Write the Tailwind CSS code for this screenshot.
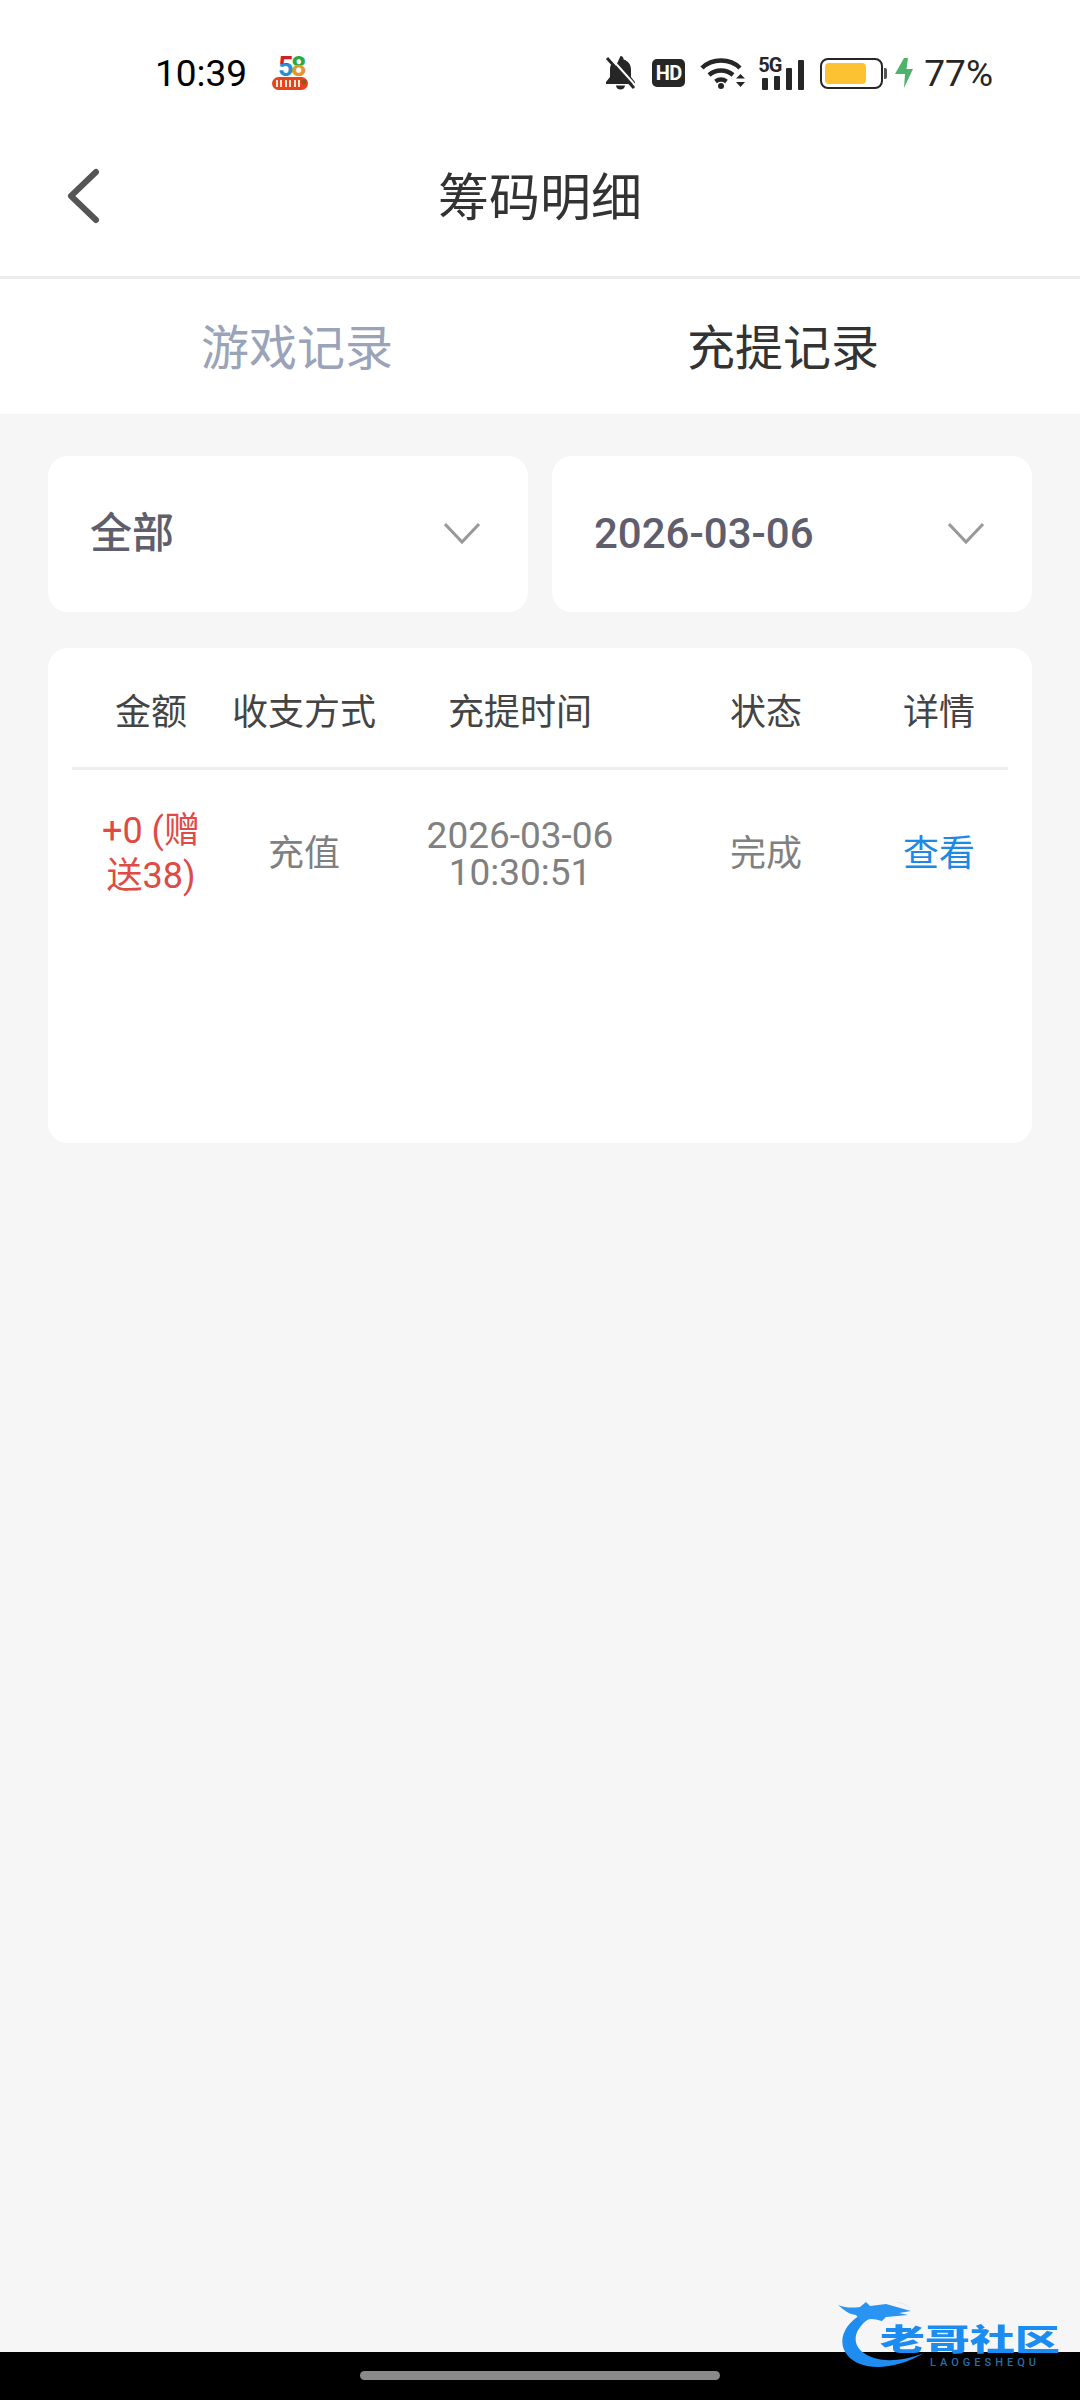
<!DOCTYPE html>
<html lang="zh-CN">
<head>
  <meta charset="UTF-8">
  <title>筹码明细</title>
  <script src="https://cdn.jsdelivr.net/npm/@tailwindcss/browser@4"></script>
</head>
<body class="bg-[#f6f6f6] font-['Roboto','Noto_Sans_CJK_SC',sans-serif]">
  <div class="relative flex h-[2400px] w-[1080px] flex-col overflow-hidden">

    <!-- status bar -->
    <div class="flex h-[120px] items-center bg-white pt-[26px]">
      <div class="ml-[155px] w-[117px] text-[37px] leading-none text-black">10:39</div>
      <svg class="h-[34px] w-[36px] overflow-visible" viewBox="0 0 36 34">
        <defs>
          <linearGradient id="five" x1="0" y1="0" x2="0" y2="1">
            <stop offset="0.42" stop-color="#d0202c"/><stop offset="0.42" stop-color="#2a8fd0"/>
          </linearGradient>
          <linearGradient id="eight" x1="0" y1="0" x2="0" y2="1">
            <stop offset="0.45" stop-color="#2cab3a"/><stop offset="0.45" stop-color="#e8962a"/>
          </linearGradient>
        </defs>
        <text x="6" y="20" font-family="Roboto" font-size="27" font-weight="700" fill="url(#five)">5</text>
        <text x="19" y="20" font-family="Roboto" font-size="27" font-weight="700" fill="url(#eight)">8</text>
        <rect x="0" y="21" width="36" height="13" rx="6.5" fill="#e8431c"/>
        <path d="M5 24v7M9 24v7M14 24v7M18 24v7M23 24v7M27 24v7" stroke="#ffe9d8" stroke-width="2"/>
        <circle cx="32" cy="26" r="2.500" fill="#8a5a20"/>
      </svg>
      <div class="ml-auto flex items-center pr-[87px]">
        <!-- bell off -->
        <svg class="h-[34px] w-[31px]" viewBox="0 0 31 34" fill="#262626">
          <path d="M15.5 0a3 3 0 0 1 3 3.4c4.600 1.300 7.500 5.200 7.500 10.100v7.500l4 5v2H1v-2l4-5v-7.500c0-2 .5-3.900 1.400-5.500L21 27H3z"/>
          <path d="M11 29.500h9a4.500 4 0 0 1-9 0z"/>
          <path d="M2 2 29 32" stroke="#262626" stroke-width="3"/>
          <path d="M5 1 31 30" stroke="#fff" stroke-width="2"/>
        </svg>
        <!-- HD -->
        <div class="ml-[16px] flex h-[28px] w-[33px] items-center justify-center rounded-[5px] bg-[#262626] text-[20px] font-bold leading-none tracking-[-0.5px] text-white">HD</div>
        <!-- wifi -->
        <svg class="ml-[15px] h-[34px] w-[46px]" viewBox="0 0 46 34" fill="none" stroke="#262626" stroke-width="4.500">
          <path d="M2 12C12 2 30 2 40 12"/>
          <path d="M9 19c7-6 17-6 24 0"/>
          <path d="M15.500 25.500c3.500-2.500 7.500-2.500 11 0"/>
          <circle cx="21" cy="30" r="3" fill="#262626" stroke="none"/>
          <path d="M36 22.500l4.500-4.500 4.500 4.500zM36 26h9l-4.500 5z" fill="#262626" stroke="none"/>
        </svg>
        <!-- 5G signal -->
        <div class="relative ml-[12px] h-[34px] w-[47px]">
          <span class="absolute left-0 top-[-1px] text-[20px] font-bold leading-none tracking-[-1px] text-[#262626]">5G</span>
          <div class="absolute bottom-0 left-[4px] flex items-end gap-[6px]">
            <div class="h-[12px] w-[6px] rounded-[1px] bg-[#262626]"></div>
            <div class="h-[14px] w-[6px] rounded-[1px] bg-[#262626]"></div>
            <div class="h-[22px] w-[6px] rounded-[1px] bg-[#262626]"></div>
            <div class="h-[30px] w-[6px] rounded-[1px] bg-[#262626]"></div>
          </div>
        </div>
        <!-- battery -->
        <div class="ml-[15px] flex items-center">
          <div class="flex h-[31px] w-[63px] items-center rounded-[8px] border-[2.5px] border-[#262626] bg-white pl-[3px]">
            <div class="h-[21px] w-[41px] rounded-[4px] bg-[#fcc232]"></div>
          </div>
          <div class="ml-[1px] h-[11px] w-[3px] rounded-r-[2px] bg-[#555]"></div>
        </div>
        <svg class="ml-[8px] h-[30px] w-[18px]" viewBox="0 0 18 30" fill="#4db36a"><path d="M9 0h4l-1.500 11H18L9 30l1-14H0z"/></svg>
        <div class="ml-[11px] text-[37px] leading-none text-[#262626]">77%</div>
      </div>
    </div>

    <!-- title bar -->
    <div class="relative flex h-[159px] items-center justify-center border-b-[3px] border-[#ececec] bg-white">
      <svg class="absolute left-[66px] top-[48px] h-[56px] w-[34px]" viewBox="0 0 34 56" fill="none" stroke="#555" stroke-width="6" stroke-linecap="round" stroke-linejoin="round">
        <path d="M30 4 5 28l25 24"/>
      </svg>
      <h1 class="text-[51px] font-normal leading-none text-[#333]">筹码明细</h1>
    </div>

    <!-- tabs -->
    <div class="flex h-[135px] items-center bg-white pt-[4px]">
      <div class="w-[594px] text-center text-[48px] leading-none text-[#9aa3b8]">游戏记录</div>
      <div class="w-[378px] text-center text-[48px] leading-none text-[#333]">充提记录</div>
    </div>

    <!-- filters -->
    <div class="flex-1 px-[48px] pt-[42px]">
      <div class="flex gap-[24px]">
        <div class="flex h-[156px] flex-1 items-center justify-between rounded-[20px] bg-white pl-[42px] pr-[48px]">
          <span class="text-[42px] font-medium leading-none text-[#5e5e6c]">全部</span>
          <svg class="h-[22px] w-[36px]" viewBox="0 0 36 22" fill="none" stroke="#999" stroke-width="3"><path d="M1 1l17 18L35 1"/></svg>
        </div>
        <div class="flex h-[156px] flex-1 items-center justify-between rounded-[20px] bg-white pl-[42px] pr-[48px]">
          <span class="text-[42px] font-medium leading-none text-[#5e5e6c]">2026-03-06</span>
          <svg class="h-[22px] w-[36px]" viewBox="0 0 36 22" fill="none" stroke="#999" stroke-width="3"><path d="M1 1l17 18L35 1"/></svg>
        </div>
      </div>

      <!-- record table -->
      <div class="mt-[36px] h-[495px] rounded-[20px] bg-white px-[24px]">
        <div class="grid h-[122px] grid-cols-[158px_148px_284px_208px_138px] items-center border-b-[3px] border-[#eeeeee] pt-[10px] text-center text-[36px] leading-none text-[#444]">
          <div>金额</div>
          <div>收支方式</div>
          <div>充提时间</div>
          <div>状态</div>
          <div>详情</div>
        </div>
        <div class="grid h-[168px] grid-cols-[158px_148px_284px_208px_138px] items-center text-center text-[36px] text-[#808080]">
          <div class="px-[28px] leading-[45px] text-[#e04a45]">+0 (赠送38)</div>
          <div class="leading-none">充值</div>
          <div class="text-[37px] leading-[37px]">2026-03-06<br>10:30:51</div>
          <div class="leading-none">完成</div>
          <div class="leading-none text-[#1e88e5]">查看</div>
        </div>
      </div>
    </div>

    <!-- nav bar -->
    <div class="flex h-[48px] justify-center bg-black pt-[19px]">
      <div class="h-[9px] w-[360px] rounded-full bg-[#8a8a8a]"></div>
    </div>

    <!-- watermark -->
    <div class="absolute left-[838px] top-[2302px] h-[70px] w-[226px]">
      <svg class="absolute left-0 top-0 h-[70px] w-[100px] blur-[0.5px]" viewBox="0 0 100 70" fill="none">
        <path d="M24 12C6 22-2 40 10 54c12 14 44 16 76-3-26 10-48 9-60 0C14 43 14 28 32 16z" fill="#1e8cf0"/>
        <path d="M0 3c8 3 14 3 22 2l6-5 4 4 16-2 25 7-12 2 9 2-22 2-4 4c-7-2-11-3-16-1l-4 3-6-8C10 12 6 8 0 3z" fill="#2a94f2"/>
        <path d="M38 0c12-3 28 0 34 6" stroke="#dfe6ee" stroke-width="1"/>
      </svg>
      <div class="absolute left-[42px] top-[15px] origin-center scale-y-[0.65] text-[45px] font-black leading-none text-[#1a8cf2]">老哥社区</div>
      <div class="absolute left-[92px] top-[55px] text-[11px] font-medium leading-none tracking-[4px] text-[#2a6ca8]">LAOGESHEQU</div>
    </div>
  </div>
</body>
</html>
